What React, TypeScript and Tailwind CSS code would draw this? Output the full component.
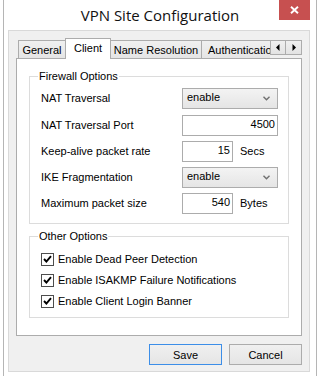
import React from "react";

function SelectBox({ value }: { value: string }) {
  return (
    <div className="w-[96px] h-[21px] border border-[#acacac] bg-linear-to-b from-[#f3f3f3] to-[#e5e5e5] flex items-start pl-[4px] pt-[2px] pr-[7px]">
      <span className="flex-1 leading-[13px]">{value}</span>
      <svg width="7" height="5" viewBox="0 0 7 5" className="mt-[5px]">
        <path d="M0.5 0.8 L3.5 3.8 L6.5 0.8" stroke="#707070" strokeWidth="1.4" fill="none" />
      </svg>
    </div>
  );
}

function NumInput({ value, wide }: { value: string; wide?: boolean }) {
  return (
    <div
      className={
        (wide ? "w-[96px]" : "w-[51px]") +
        " h-[21px] border border-[#acacac] bg-white text-right pr-[2px] pt-[2px] leading-[13px]"
      }
    >
      {value}
    </div>
  );
}

function Row({ label, children, first }: { label: string; children: React.ReactNode; first?: boolean }) {
  return (
    <div className={(first ? "" : "mt-[5px] ") + "flex items-start h-[21px]"}>
      <div className="w-[141px] pt-[4px] leading-[13px]">{label}</div>
      {children}
    </div>
  );
}

function Check({ label }: { label: string }) {
  return (
    <div className="flex items-center h-[20px]">
      <div className="w-[13px] h-[13px] border border-[#4d4d4d] bg-white flex items-center justify-center">
        <svg width="9" height="8" viewBox="0 0 9 8">
          <path d="M1 4 L3.4 6.5 L8 1.2" stroke="#000" strokeWidth="1.9" fill="none" />
        </svg>
      </div>
      <span className="ml-[4px] pt-[1px] leading-[13px]">{label}</span>
    </div>
  );
}

function Button({ label, primary }: { label: string; primary?: boolean }) {
  return (
    <div
      className={
        "w-[73px] h-[21px] border bg-linear-to-b from-[#f0f0f0] to-[#e5e5e5] flex items-center justify-center pt-[1px] leading-[13px] " +
        (primary ? "border-[#3c8ee8]" : "border-[#acacac]")
      }
    >
      {label}
    </div>
  );
}

export default function App() {
  return (
    <div className="w-[318px] h-[376px] bg-white overflow-hidden font-['Liberation_Sans',Arial,sans-serif] text-[11px] leading-[13px] text-black">
      <div className="ml-[3px] w-[314px] h-[376px] border-x border-[#b5b5b5] flex flex-col">
        {/* Title bar */}
        <div className="grid grid-cols-[1fr_auto_1fr] h-[30px] shrink-0">
          <div />
          <div className="pt-[5px] text-[15px] leading-[20px] font-['Open_Sans',sans-serif] text-[#111]">
            VPN Site Configuration
          </div>
          <div className="flex justify-end pr-[6px]">
            <div className="w-[31px] h-[20px] bg-[#c75050] flex items-center justify-center">
              <svg width="9" height="8" viewBox="0 0 9 8">
                <path d="M1 0.8 L8 7.2 M8 0.8 L1 7.2" stroke="#fff" strokeWidth="1.9" />
              </svg>
            </div>
          </div>
        </div>

        {/* Client area */}
        <div className="ml-[4px] w-[302px] h-[342px] border border-[#d9d9d9] bg-[#f0f0f0] px-[7px] pt-[7px] flex flex-col">
          {/* Tab strip */}
          <div className="relative z-10 flex h-[21px] w-[286px]">
            <div className="ml-[2px] w-[252px] h-[21px] overflow-hidden flex items-end">
              <div className="w-[47px] h-[18px] mb-[1px] shrink-0 border-l border-t border-[#acacac] bg-linear-to-b from-[#f0f0f0] to-[#e5e5e5] text-center pt-[3px]">
                General
              </div>
              <div className="w-[46px] h-[21px] shrink-0 border-l border-t border-r border-[#acacac] bg-white text-center pt-[3px]">
                Client
              </div>
              <div className="w-[90px] h-[18px] mb-[1px] shrink-0 border-t border-[#acacac] bg-linear-to-b from-[#f0f0f0] to-[#e5e5e5] text-center pt-[3px] whitespace-nowrap">
                Name Resolution
              </div>
              <div className="w-[80px] h-[18px] mb-[1px] shrink-0 border-l border-t border-r border-[#acacac] bg-linear-to-b from-[#f0f0f0] to-[#e5e5e5] pl-[6px] pt-[3px] whitespace-nowrap">
                Authentication
              </div>
            </div>
            <div className="flex pt-[2px]">
              <div className="w-[16px] h-[15px] border border-[#acacac] bg-linear-to-b from-[#f0f0f0] to-[#e3e3e3] flex items-center justify-center">
                <svg width="4" height="7" viewBox="0 0 4 7">
                  <path d="M3.5 0 L0 3.5 L3.5 7 Z" fill="#000" />
                </svg>
              </div>
              <div className="w-[16px] h-[15px] border border-l-0 border-[#acacac] bg-linear-to-b from-[#f0f0f0] to-[#e3e3e3] flex items-center justify-center">
                <svg width="4" height="7" viewBox="0 0 4 7">
                  <path d="M0.5 0 L4 3.5 L0.5 7 Z" fill="#000" />
                </svg>
              </div>
            </div>
          </div>

          {/* Panel */}
          <div className="relative z-0 -mt-[1px] w-[286px] h-[278px] border border-[#acacac] bg-white pl-[12px] pt-[10px]">
            <fieldset className="w-[260px] border border-[#dcdcdc] m-0 p-0">
              <legend className="ml-[8px] px-[1px] leading-[14px]">Firewall Options</legend>
              <div className="pl-[11px] pt-[5px] pb-[9px] flex flex-col">
                <Row label="NAT Traversal" first>
                  <SelectBox value="enable" />
                </Row>
                <div className="mt-[6px] flex items-start h-[21px]">
                  <div className="w-[141px] pt-[4px] leading-[13px]">NAT Traversal Port</div>
                  <NumInput value="4500" wide />
                </div>
                <Row label="Keep-alive packet rate">
                  <NumInput value="15" />
                  <span className="ml-[7px] pt-[4px]">Secs</span>
                </Row>
                <Row label="IKE Fragmentation">
                  <SelectBox value="enable" />
                </Row>
                <Row label="Maximum packet size">
                  <NumInput value="540" />
                  <span className="ml-[7px] pt-[4px]">Bytes</span>
                </Row>
              </div>
            </fieldset>

            <fieldset className="mt-[5px] w-[260px] border border-[#dcdcdc] m-0 p-0">
              <legend className="ml-[8px] px-[1px] leading-[14px]">Other Options</legend>
              <div className="pl-[11px] pt-[6px] pb-[6px] flex flex-col gap-[1px]">
                <Check label="Enable Dead Peer Detection" />
                <Check label="Enable ISAKMP Failure Notifications" />
                <Check label="Enable Client Login Banner" />
              </div>
            </fieldset>
          </div>

          {/* Buttons */}
          <div className="mt-[8px] w-[286px] flex justify-end gap-[7px]">
            <Button label="Save" primary />
            <Button label="Cancel" />
          </div>
        </div>
      </div>
    </div>
  );
}
